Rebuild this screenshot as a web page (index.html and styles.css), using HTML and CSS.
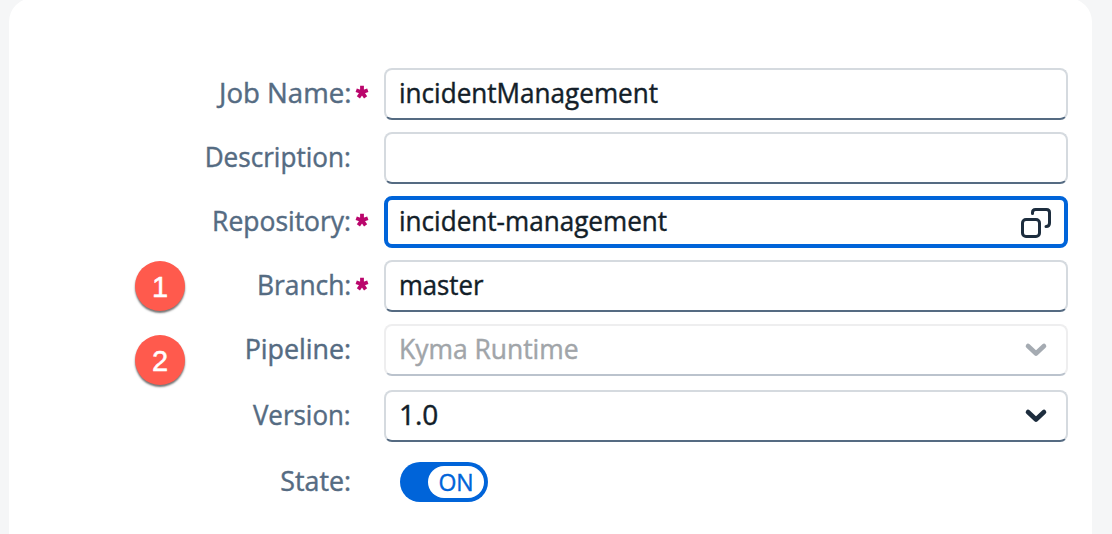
FILE: index.html
```html
<!DOCTYPE html>
<html lang="en">
<head>
<meta charset="utf-8">
<title>Job</title>
<link rel="stylesheet" href="styles.css">
</head>
<body>
<main class="card">
  <div class="row">
    <div class="label"><span class="text t-job">Job Name:</span></div><div class="req"><svg width="14" height="14" viewBox="0 0 14 14"><path d="M7 7.2V.8M7 7.2L12.8 5.2M7 7.2L10.6 12.4M7 7.2L3.4 12.4M7 7.2L1.2 5.2"/></svg></div>
    <div class="field"><span class="text t-im">incidentManagement</span></div>
  </div>
  <div class="row">
    <div class="label"><span class="text t-desc">Description:</span></div><div class="req"></div>
    <div class="field"></div>
  </div>
  <div class="row">
    <div class="label"><span class="text t-repo">Repository:</span></div><div class="req"><svg width="14" height="14" viewBox="0 0 14 14"><path d="M7 7.2V.8M7 7.2L12.8 5.2M7 7.2L10.6 12.4M7 7.2L3.4 12.4M7 7.2L1.2 5.2"/></svg></div>
    <div class="field focused"><span class="text t-rm">incident-management</span>
      <svg class="help" width="32" height="32" viewBox="0 0 32 32"><rect x="2.5" y="12.5" width="17" height="17" rx="3.5"/><path d="M12.5 6.5V5.5Q12.5 2.5 15.5 2.5H26.5Q29.5 2.5 29.5 5.5V16Q29.5 19.5 26 19.5"/></svg>
    </div>
  </div>
  <div class="row">
    <div class="label"><span class="badge">1</span><span class="text t-branch">Branch:</span></div><div class="req"><svg width="14" height="14" viewBox="0 0 14 14"><path d="M7 7.2V.8M7 7.2L12.8 5.2M7 7.2L10.6 12.4M7 7.2L3.4 12.4M7 7.2L1.2 5.2"/></svg></div>
    <div class="field"><span class="text t-master">master</span></div>
  </div>
  <div class="row tall">
    <div class="label"><span class="badge second">2</span><span class="text t-pipe">Pipeline:</span></div><div class="req"></div>
    <div class="field disabled"><span class="text t-kyma">Kyma Runtime</span>
      <svg class="arrow" width="24" height="16" viewBox="0 0 24 16"><path d="M4 4L12 11.5L20 4"/></svg>
    </div>
  </div>
  <div class="row tall">
    <div class="label"><span class="text t-ver">Version:</span></div><div class="req"></div>
    <div class="field"><span class="text t-one">1.0</span>
      <svg class="arrow" width="24" height="16" viewBox="0 0 24 16"><path d="M4 4L12 11.5L20 4"/></svg>
    </div>
  </div>
  <div class="row">
    <div class="label"><span class="text t-state">State:</span></div><div class="req"></div>
    <div class="switch"><span class="handle"><span class="on">ON</span></span></div>
  </div>
</main>
</body>
</html>
```
FILE: styles.css
```css
* { box-sizing: border-box; }
body { margin: 0; height: 534px; overflow: hidden; background: #f5f6f7; font-family: "Open Sans", sans-serif; font-size: 28px; }
.card { width: 1083px; height: 560px; margin: -2px 0 0 9px; padding: 70px 24px 0 0; background: #fff; border-radius: 24px; }
.row { display: flex; align-items: center; height: 52px; margin-bottom: 12px; }
.row.tall { margin-bottom: 14px; }
.label { position: relative; display: flex; justify-content: flex-end; width: 342px; color: #556b82; }
.text { display: block; line-height: 52px; white-space: nowrap; margin-top: -4px; transform-origin: left; -webkit-text-stroke: .45px currentColor; }
.label .text { transform-origin: right; }
.t-job { transform: scaleX(.985); }
.t-im { transform: scaleX(.932); }
.t-desc { transform: scaleX(.932); }
.t-repo { transform: scaleX(.945); }
.t-rm { transform: scaleX(.932); }
.t-branch { transform: scaleX(.94); }
.t-master { transform: scaleX(.918); }
.t-pipe { transform: scaleX(.958); }
.t-kyma { transform: scaleX(.944); }
.t-ver { transform: scaleX(.925); }
.t-state { transform: scaleX(.955); }
.req { display: flex; width: 33px; height: 14px; margin-top: -4px; padding-left: 4px; }
.req svg { fill: none; stroke: #ba066c; stroke-width: 3.8; }
.field { display: flex; align-items: center; width: 684px; height: 52px; padding: 0 18px 0 13px; border: 2px solid #d5dadf; border-bottom-color: #556b82; border-radius: 8px; color: #131e29; }
.focused { padding: 0 12px 0 11px; border: 4px solid #0064d9; }
.disabled { border-color: #eeeeef; border-bottom-color: #bbc3cd; color: #a1a5a9; }
.help, .arrow { margin-left: auto; fill: none; stroke: #1d2d3e; stroke-width: 3; stroke-linecap: round; stroke-linejoin: round; }
.help { margin-top: 1px; }
.arrow { stroke-width: 4.6; }
.disabled .arrow { stroke: #a5abb2; }
.badge { position: absolute; left: 126px; top: -1px; width: 50px; height: 50px; border-radius: 50%; background: #ff5a4d; color: #fff; box-shadow: 0 2px 2px rgba(0,0,0,.55); font: 29px/52px "Liberation Sans", sans-serif; text-align: center; -webkit-text-stroke: .5px #fff; }
.second { top: 9px; }
.switch { display: flex; align-items: center; justify-content: flex-end; width: 88px; height: 40px; margin-left: 16px; padding: 4px; border-radius: 20px; background: #0064d9; }
.handle { display: flex; align-items: center; justify-content: center; width: 56px; height: 32px; border-radius: 16px; background: #fff; color: #0064d9; }
.on { font-size: 23px; line-height: 32px; margin-top: -1px; -webkit-text-stroke: .4px currentColor; }
```
